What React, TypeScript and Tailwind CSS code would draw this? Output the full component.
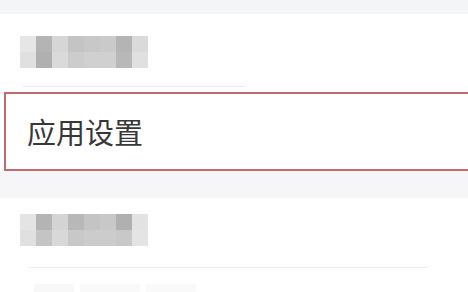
const rowA = [
  ['#e6e6e6', '#b4b4b4', '#d6d6d6', '#c4c4c4', '#c8c8c8', '#cacaca', '#b4b4b4', '#dadada'],
  ['#e0e0e0', '#b0b0b0', '#dadada', '#cccccc', '#d0d0d0', '#d0d0d0', '#b8b8b8', '#e0e0e0'],
];

const rowB = [
  ['#e4e4e4', '#b4b4b4', '#d4d4d4', '#b8b8b8', '#c4c4c4', '#c8c8c8', '#b0b0b0', '#e2e2e2'],
  ['#e0e0e0', '#c4c4c4', '#d8d8d8', '#c8c8c8', '#cccccc', '#cccccc', '#c8c8c8', '#e4e4e4'],
];

// Mosaic that hides the blurred label
function Mosaic({ cells }: { cells: string[][] }) {
  return (
    <div className="flex flex-col">
      {cells.map((line, i) => (
        <div key={i} className="flex">
          {line.map((c, j) => (
            <div key={j} className="w-[16px] h-[16px]" style={{ backgroundColor: c }} />
          ))}
        </div>
      ))}
    </div>
  );
}

export default function App() {
  return (
    <div
      className="w-[468px] h-[292px] overflow-hidden bg-white"
      style={{ fontFamily: '"Noto Sans CJK SC", "Noto Sans", sans-serif' }}
    >
      {/* Top gap */}
      <div className="h-[14px] bg-[#f4f5f7]" />

      {/* Blurred row */}
      <div className="pl-[20px] pt-[22px] pb-[5px]">
        <Mosaic cells={rowA} />
        <div className="mt-[18px] ml-[3px] w-[222px] h-px bg-[#ebebeb]" />
      </div>

      {/* Highlighted item */}
      <div className="ml-[4px] h-[79px] border-2 border-r-0 border-[#c26b6e] bg-white flex items-center pl-[21px]">
        <span className="text-[29px] leading-none text-[#383838]">应用设置</span>
      </div>

      {/* Gap */}
      <div className="h-[27px] bg-[#f6f5f7]" />

      {/* Blurred row */}
      <div className="pl-[20px] pt-[16px]">
        <Mosaic cells={rowB} />
        <div className="mt-[21px] ml-[7px] w-[401px] h-px bg-[#efefef]" />
        <div className="mt-[16px] ml-[14px] flex gap-[6px]">
          <div className="w-[40px] h-[8px] bg-[#f8f8f8]" />
          <div className="w-[60px] h-[8px] bg-[#f9f9f9]" />
          <div className="w-[50px] h-[8px] bg-[#f9f9f9]" />
        </div>
      </div>
    </div>
  );
}
